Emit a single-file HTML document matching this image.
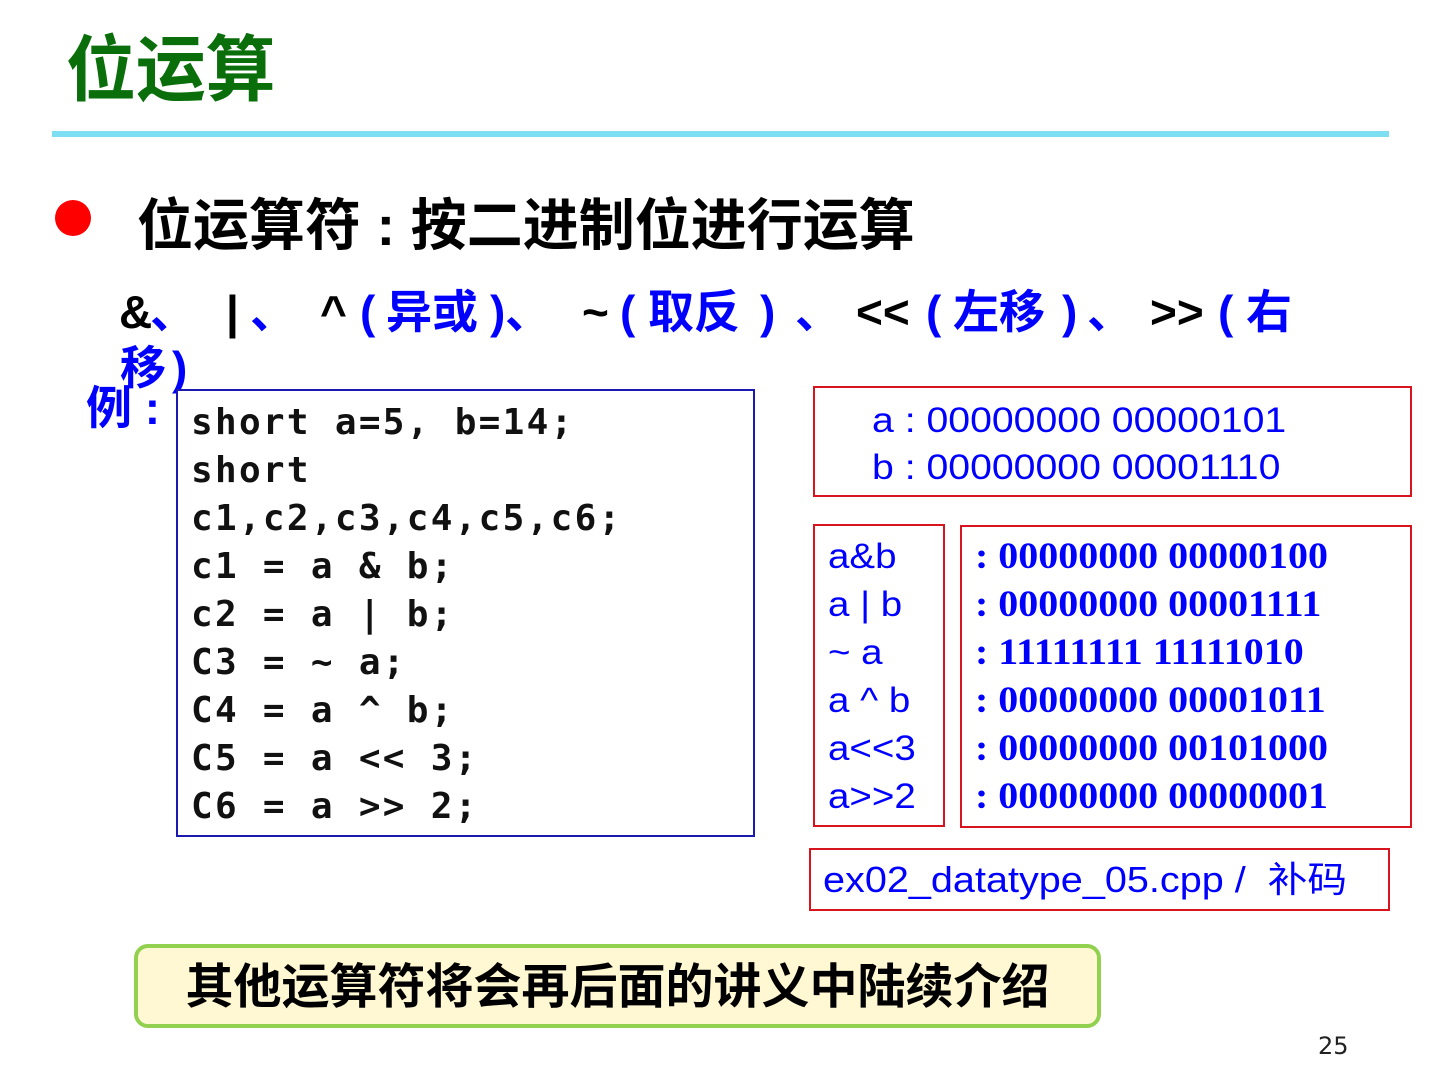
<!DOCTYPE html>
<html><head><meta charset="utf-8"><style>
html,body{margin:0;padding:0;width:1440px;height:1080px;background:#fff;overflow:hidden;position:relative}
.a{position:absolute;white-space:nowrap}
.cjk{font-family:"Liberation Sans","Noto Sans CJK SC",sans-serif}
.box{position:absolute;box-sizing:border-box}
.op{position:absolute;top:284px;font-family:"Liberation Sans","Noto Sans CJK SC",sans-serif;font-size:46px;line-height:56px;font-weight:bold;white-space:nowrap}
.b{color:#00f}
.k{color:#000}
</style></head><body>
<div class="a cjk" style="left:66px;top:28px;font-size:72px;line-height:86px;color:#0a6e0a;font-weight:bold;transform:scaleX(0.97);transform-origin:left">位运算</div>
<div class="box" style="left:52px;top:131px;width:1337px;height:6px;background:#7fdff2"></div>

<div class="box" style="left:55px;top:200px;width:36px;height:36px;border-radius:50%;background:#f00"></div>
<div class="a cjk" style="left:137px;top:190px;font-size:56px;line-height:72px;font-weight:bold;color:#000">位运算符 : 按二进制位进行运算</div>

<div class="op k" style="left:119px">&amp;</div>
<div class="op b" style="left:150px">、</div>
<div class="op k" style="left:226px">|</div>
<div class="op b" style="left:250px">、</div>
<div class="op k" style="left:320px">^</div>
<div class="op b" style="left:360px">(</div>
<div class="op b" style="left:386px">异或</div>
<div class="op b" style="left:490px">)</div>
<div class="op b" style="left:505px">、</div>
<div class="op k" style="left:582px">~</div>
<div class="op b" style="left:620px">(</div>
<div class="op b" style="left:648px">取反</div>
<div class="op b" style="left:760px">)</div>
<div class="op b" style="left:795px">、</div>
<div class="op k" style="left:856px">&lt;&lt;</div>
<div class="op b" style="left:926px">(</div>
<div class="op b" style="left:953px">左移</div>
<div class="op b" style="left:1062px">)</div>
<div class="op b" style="left:1087px">、</div>
<div class="op k" style="left:1150px">&gt;&gt;</div>
<div class="op b" style="left:1218px">(</div>
<div class="op b" style="left:1246px">右</div>
<div class="op b" style="left:120px;top:340px">移</div>
<div class="op b" style="left:172px;top:340px">)</div>
<div class="op b" style="left:86px;top:380px">例 :</div>

<div class="box" style="left:176px;top:389px;width:579px;height:448px;border:2px solid #1a1ab0;background:#fff"></div>
<div class="a" style="left:191px;top:399px;font-family:'DejaVu Sans Mono','Liberation Mono',monospace;font-weight:bold;font-size:36px;line-height:48px;letter-spacing:2.3px;color:#111">short a=5, b=14;<br>short<br>c1,c2,c3,c4,c5,c6;<br>c1 = a &amp; b;<br>c2 = a | b;<br>C3 = ~ a;<br>C4 = a ^ b;<br>C5 = a &lt;&lt; 3;<br>C6 = a &gt;&gt; 2;</div>

<div class="box" style="left:813px;top:386px;width:599px;height:111px;border:2px solid #d8141e"></div>
<div class="a" style="left:872px;top:397px;font-family:'Liberation Sans',sans-serif;font-size:35px;line-height:47px;color:#00f;transform:scaleX(1.12);transform-origin:left">a : 00000000 00000101<br>b : 00000000 00001110</div>

<div class="box" style="left:813px;top:524px;width:132px;height:303px;border:2px solid #d8141e"></div>
<div class="a" style="left:828px;top:533px;font-family:'Liberation Sans',sans-serif;font-size:35px;line-height:48px;color:#00f;transform:scaleX(1.1);transform-origin:left">a&amp;b<br>a | b<br>~ a<br>a ^ b<br>a&lt;&lt;3<br>a&gt;&gt;2</div>

<div class="box" style="left:960px;top:525px;width:452px;height:303px;border:2px solid #d8141e"></div>
<div class="a" style="left:975px;top:533px;font-family:'Liberation Serif',serif;font-weight:bold;font-size:37px;line-height:48px;color:#00f;transform:scaleX(1.08);transform-origin:left">: 00000000 00000100<br>: 00000000 00001111<br>: 11111111 11111010<br>: 00000000 00001011<br>: 00000000 00101000<br>: 00000000 00000001</div>

<div class="box" style="left:809px;top:848px;width:581px;height:63px;border:2px solid #d8141e"></div>
<div class="a cjk" style="left:823px;top:857px;font-size:36px;line-height:46px;color:#00f;transform:scaleX(1.1);transform-origin:left">ex02_datatype_05.cpp /&nbsp; 补码</div>

<div class="box" style="left:134px;top:944px;width:967px;height:84px;border:4px solid #92d050;border-radius:14px;background:#fff8d2"></div>
<div class="a cjk" style="left:134px;top:958px;width:967px;text-align:center;font-size:48px;line-height:60px;font-weight:bold;color:#000">其他运算符将会再后面的讲义中陆续介绍</div>

<div class="a" style="left:1318px;top:1031px;font-family:'DejaVu Sans',sans-serif;font-size:24px;line-height:30px;color:#222">25</div>
</body></html>
